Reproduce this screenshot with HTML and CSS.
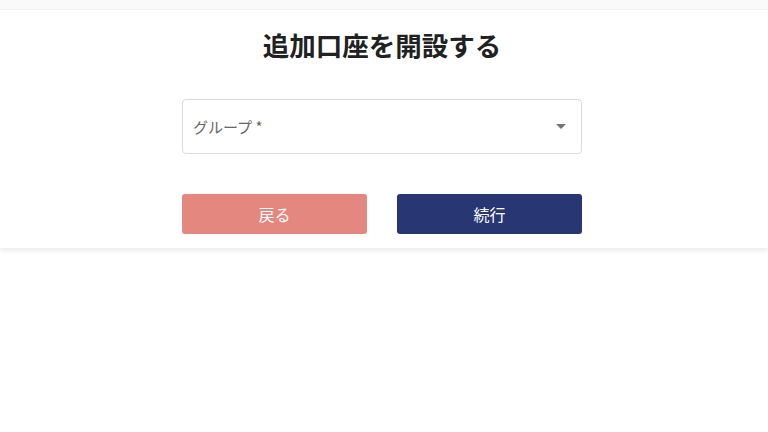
FILE: index.html
```html
<!DOCTYPE html>
<html lang="ja">
<head>
<meta charset="utf-8">
<link rel="stylesheet" href="styles.css">
</head>
<body>
<div class="topband"></div>
<main class="card">
  <h1 class="title">追加口座を開設する</h1>
  <div class="select">
    <span class="label">グループ *</span>
    <svg class="arrow" width="10" height="5" viewBox="0 0 10 5"><path d="M0 0h10L5 5z" fill="#757575"/></svg>
  </div>
  <div class="actions">
    <button class="btn back">戻る</button>
    <button class="btn next">続行</button>
  </div>
</main>
</body>
</html>
```
FILE: styles.css
```css
* { box-sizing: border-box; }
html, body { margin: 0; padding: 0; background: #fff; }
body { font-family: "Noto Sans CJK JP", "Noto Sans", sans-serif; width: 768px; height: 432px; overflow: hidden; }
.topband { height: 10px; background: #fafafa; border-bottom: 1px solid #f3f3f3; }
.card {
  background: #fff;
  height: 238px;
  box-shadow: 0 3px 5px rgba(0,0,0,0.08);
  display: flex;
  flex-direction: column;
  align-items: center;
  padding: 17px 4px 0 0;
}
.title {
  margin: 0;
  font-size: 26.5px;
  line-height: 36px;
  font-weight: 700;
  color: #212121;
  letter-spacing: 0;
}
.select {
  margin-top: 36px;
  width: 400px;
  height: 55px;
  border: 1px solid #dcdcdc;
  border-radius: 4px;
  display: flex;
  align-items: center;
  justify-content: space-between;
  padding: 0 15px 0 10px;
}
.label { font-size: 15px; color: #666; }
.actions {
  margin-top: 40px;
  display: flex;
  gap: 30px;
}
.btn {
  width: 185px;
  height: 40px;
  border: none;
  border-radius: 3px;
  color: #fff;
  font-family: inherit;
  font-size: 16px;
  padding: 0;
}
.back { background: #e4877f; }
.next { background: #283673; }
```
